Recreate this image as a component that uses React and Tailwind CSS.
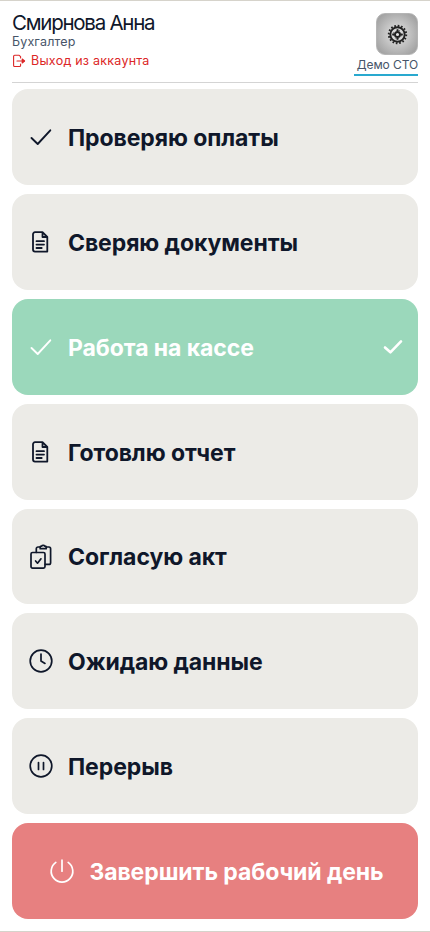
import React from 'react';

function CheckIcon({ className }) {
  return (
    <svg viewBox="0 0 24 24" className={className} fill="none" stroke="currentColor" strokeWidth="1.9" strokeLinecap="round" strokeLinejoin="round">
      <path d="M2.5 13 8.7 19 21.3 5.3" />
    </svg>
  );
}

function DocumentIcon({ className }) {
  return (
    <svg viewBox="0 0 24 24" className={className} fill="none" stroke="currentColor" strokeWidth="1.8" strokeLinecap="round" strokeLinejoin="round">
      <path d="M13.5 2.2H6a2 2 0 0 0-2 2v15.4a2 2 0 0 0 2 2h12.3V7zM13.5 2.2V7h4.8" />
      <path d="M7.5 11.2h7.5M7.5 14.6h7.5M7.5 18h5.2" />
    </svg>
  );
}

function ClipboardIcon({ className }) {
  return (
    <svg viewBox="0 0 24 24" className={className} fill="none" stroke="currentColor" strokeWidth="1.7" strokeLinecap="round" strokeLinejoin="round">
      <rect x="2" y="8.5" width="14" height="15.6" rx="1.5" />
      <path d="M6.6 17 8.5 19.2 12 14.8" />
      <path d="M7.3 8.3V4.7A1.7 1.7 0 0 1 9 3h2M17.3 3h2.6a1.7 1.7 0 0 1 1.7 1.7v14a1.7 1.7 0 0 1-1.7 1.7H16.3" />
      <path d="M11.2 4.7V3c0-.6.4-.9.9-.9h.7c.3-1.1 2.5-1.1 2.8 0h.7c.5 0 .9.3.9.9v1.7z" />
    </svg>
  );
}

function ClockIcon({ className }) {
  return (
    <svg viewBox="0 0 24 24" className={className} fill="none" stroke="currentColor" strokeWidth="1.7" strokeLinecap="round" strokeLinejoin="round">
      <circle cx="12" cy="12" r="10.8" />
      <path d="M12 5v7l4 2.4" />
    </svg>
  );
}

function PauseIcon({ className }) {
  return (
    <svg viewBox="0 0 24 24" className={className} fill="none" stroke="currentColor" strokeWidth="1.7" strokeLinecap="round">
      <circle cx="12" cy="12" r="10.8" />
      <path d="M9.5 8.5v7M14.5 8.5v7" />
    </svg>
  );
}

function PowerIcon({ className }) {
  return (
    <svg viewBox="0 0 24 24" className={className} fill="none" stroke="currentColor" strokeWidth="1.7" strokeLinecap="round">
      <path d="M12 1.2v11M5.8 3.4a10.8 10.8 0 1 0 12.4 0" />
    </svg>
  );
}

function LogoutIcon({ className }) {
  return (
    <svg viewBox="0 0 14 14" className={className} fill="none" stroke="currentColor" strokeWidth="1.1" strokeLinecap="round" strokeLinejoin="round">
      <path d="M8.6 4V2.6L7.2 1.3H2.6a1 1 0 0 0-1 1v9.2a1 1 0 0 0 1 1h5a1 1 0 0 0 1-1V10" />
      <path d="M5 7h7.3" />
      <path d="M10.2 5 12.6 7l-2.4 2z" fill="currentColor" />
    </svg>
  );
}

function GearLogo({ className }) {
  return (
    <svg viewBox="0 0 24 24" className={className} fill="none" stroke="currentColor">
      <circle cx="12" cy="12" r="10" strokeWidth="2.2" strokeDasharray="1.9 2.02" />
      <circle cx="12" cy="12" r="8.2" strokeWidth="2.2" />
      <circle cx="12" cy="12" r="2.9" strokeWidth="2.2" />
      <circle cx="12" cy="12" r="5" strokeWidth="1" strokeDasharray="4 3.854" strokeDashoffset="2" />
      <path d="M12 6v2.5M12 15.5V18M6 12h2.5M15.5 12H18" strokeWidth="1.6" />
    </svg>
  );
}

const statuses = [
  { key: 'payments', title: 'Проверяю оплаты', icon: CheckIcon },
  { key: 'documents', title: 'Сверяю документы', icon: DocumentIcon },
  { key: 'cashbox', title: 'Работа на кассе', icon: CheckIcon },
  { key: 'report', title: 'Готовлю отчет', icon: DocumentIcon },
  { key: 'act', title: 'Согласую акт', icon: ClipboardIcon },
  { key: 'waiting', title: 'Ожидаю данные', icon: ClockIcon },
  { key: 'break', title: 'Перерыв', icon: PauseIcon },
];

export default function App() {
  const [active, setActive] = React.useState('cashbox');

  return (
    <div className="flex h-screen flex-col border-y border-[#d6d3cb] bg-white px-3 pb-3 font-['Inter',sans-serif] text-[#0f172a]">
      <header className="flex h-[82px] shrink-0 justify-between border-b border-[#d4d4d4]">
        <div className="pt-[9px]">
          <h1 className="text-[20.5px] leading-[25px] tracking-[-1.25px]">Смирнова Анна</h1>
          <p className="text-[12.5px] leading-[13px] tracking-[0.15px] text-[#475569]">Бухгалтер</p>
          <button className="mt-1.5 flex items-center gap-[5px] text-[12.5px] leading-[14px] tracking-[0.24px] text-[#dc2626]">
            <LogoutIcon className="size-3.5" />
            <span>Выход из аккаунта</span>
          </button>
        </div>
        <div className="flex flex-col items-end pt-3">
          <div className="flex size-[42px] items-center justify-center rounded-[9px] border border-[#b5b5b5] bg-[radial-gradient(circle,#e5e5e5_0%,#a3a3a3_85%)] text-[#222]">
            <GearLogo className="size-[21px]" />
          </div>
          <span className="mt-0.5 border-b-2 border-[#29a9cf] pb-px pl-[3px] text-[12px] leading-[16px] tracking-[-0.1px] text-[#475569]">Демо СТО</span>
        </div>
      </header>

      <main className="mt-1.5 flex flex-1 flex-col gap-[9px]">
        {statuses.map((item) => {
          const Icon = item.icon;
          const isActive = item.key === active;

          return (
            <button
              key={item.key}
              onClick={() => setActive(item.key)}
              className={`flex flex-1 items-center rounded-2xl px-[17px] text-left ${
                isActive ? 'bg-[#9bd8bb] text-white' : 'bg-[#ecebe7]'
              }`}
            >
              <Icon className="size-6 shrink-0 overflow-visible" />
              <span className="ml-[15px] flex-1 pt-0.5 text-[23px] leading-8 font-bold tracking-[-0.08px]">{item.title}</span>
              {isActive && (
                <svg viewBox="0 0 24 24" className="-mr-1 size-6" fill="none" stroke="currentColor" strokeWidth="2.6" strokeLinecap="round" strokeLinejoin="round">
                  <path d="m4 12.5 5.4 4.8L20 6.4" />
                </svg>
              )}
            </button>
          );
        })}
        <button className="flex flex-1 items-center justify-center rounded-2xl bg-[#e78080] pl-1 text-white">
          <PowerIcon className="size-6 shrink-0 overflow-visible" />
          <span className="ml-[15px] pt-0.5 text-[23px] leading-8 font-bold tracking-[-0.08px]">Завершить рабочий день</span>
        </button>
      </main>
    </div>
  );
}
